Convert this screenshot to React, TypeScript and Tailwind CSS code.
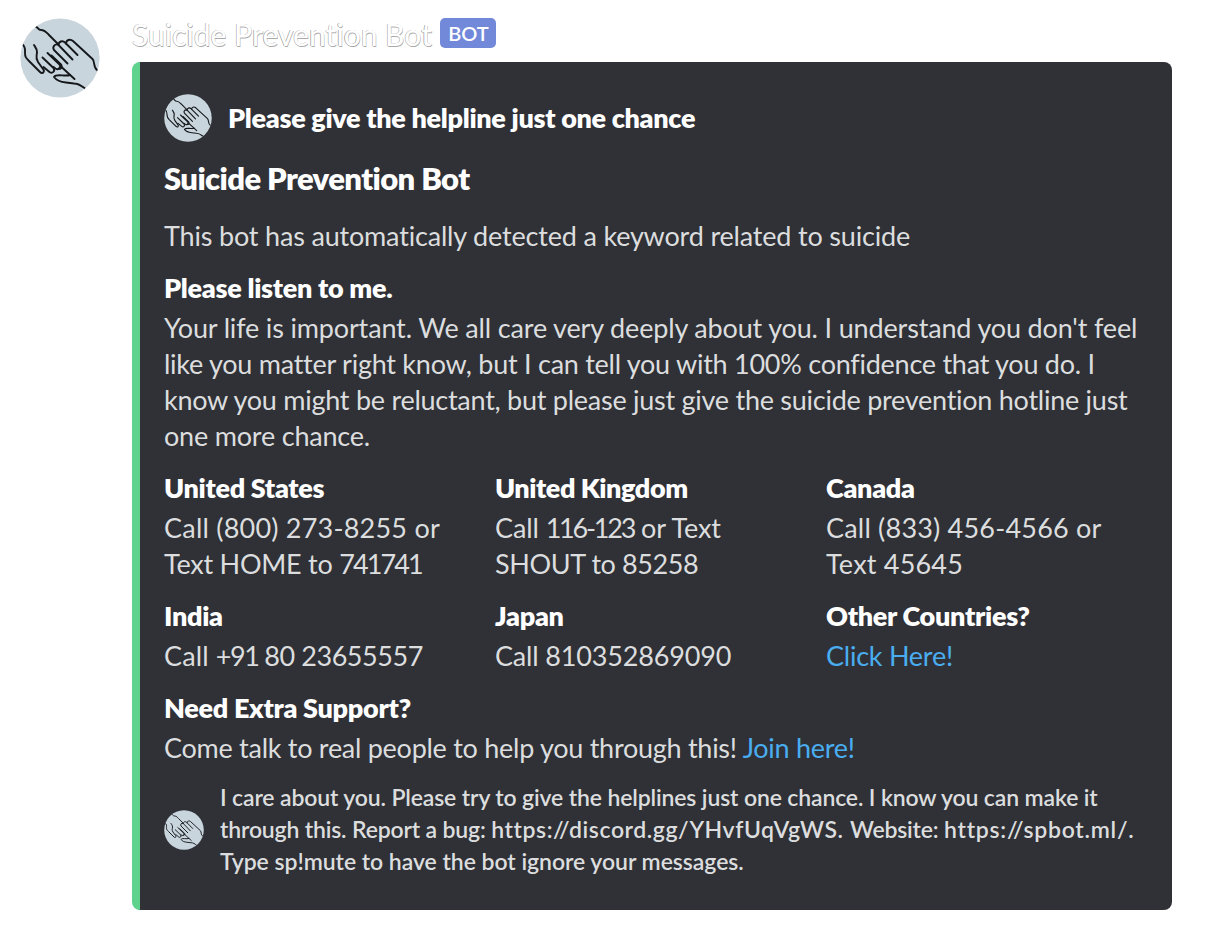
import type { ReactNode } from "react";

function Hands({ className }: { className: string }) {
  return (
    <svg viewBox="0 0 80 80" className={className} fill="none" stroke="#15181b" strokeWidth="1.9" strokeLinecap="round" strokeLinejoin="round">
      <clipPath id="disc">
        <circle cx="40" cy="40" r="39.6" />
      </clipPath>
      <circle cx="40" cy="40" r="39.6" fill="#c9d5dd" stroke="none" />
      <g clipPath="url(#disc)">
        <path d="M15 8c3 1 3 4 6 4 4 0 6 3 8 5l9 9" />
        <path d="M2 26c4 3 3 6 3 9 0 4 1 5 4 8l11 11c3 3 5-1 3-3l-5-7c-3-5-1-6-1-10 0-3-1-4-3-7" />
        <path d="M22.500 39.500l11 10.500c2 3-1 6-4 4l-6-5" />
        <path d="M27.500 35l12 11.500c2 3-1 6-4 4l-2-1.500" />
        <path d="M31.500 37.500l9.500 9c2 3-1 5-2.500 4" />
        <path d="M47.500 45.500L34 32c-2-3 1-7 4.500-5l14 14.500" />
        <path d="M38.500 27c0-3.500 4-5 6.500-2.500L57.500 37" />
        <path d="M46 25.500c0-3.500 4-5 7-2.500L72.500 41c3 3 0 8 5 11.500" />
        <path d="M41.500 49L54.500 61" />
        <path d="M50 57c-5 2-14-2-16 2 3 4 7 5 12 5.500l8 1c5 0 7 2 11 5" />
      </g>
    </svg>
  );
}

function Name({ children }: { children: ReactNode }) {
  return <h3 className="h-9 text-[27px] leading-9 font-extrabold tracking-[-0.3px] text-white">{children}</h3>;
}

const line = "block whitespace-nowrap";

export default function App() {
  return (
    <main className="flex h-[938px] w-[1206px] items-start overflow-hidden bg-white pl-5 pt-[18px] font-['Lato',sans-serif] [font-variant-ligatures:none]">
      <Hands className="size-20 shrink-0" />
      <div className="ml-8 w-[1040px]">
        <header className="flex h-11 items-start">
          <span className="-mt-0.5 h-9 w-[308px] whitespace-nowrap text-[30px] leading-9 font-medium text-white [text-shadow:-0.6px_0_0.5px_#999,0.5px_0.6px_0.5px_#aaa]">Suicide Prevention Bot</span>
          <span className="h-[30px] w-14 rounded-[5px] bg-[#7289da] pl-px text-center text-[20px] leading-[31px] font-semibold text-white">BOT</span>
        </header>
        <article className="h-[848px] rounded-lg border-l-8 border-[#5fd38d] bg-[#2f3136] pl-6 pt-8 text-[27px] leading-9 text-[#dcddde]">
          <div className="flex h-12 items-center gap-4">
            <Hands className="size-12 shrink-0" />
            <span className="whitespace-nowrap font-extrabold tracking-[-0.32px] text-white">Please give the helpline just one chance</span>
          </div>
          <h2 className="mt-3.5 h-[46px] text-[31px] leading-[44px] font-extrabold tracking-[-0.6px] text-white">Suicide Prevention Bot</h2>
          <p className="mt-4 tracking-[-0.18px]">This bot has automatically detected a keyword related to suicide</p>
          <section className="mt-4">
            <Name>Please listen to me.</Name>
            <p className="mt-1">
              <span className={`${line} tracking-[-0.16px]`}>Your life is important. We all care very deeply about you. I understand you don't feel</span>
              <span className={`${line} tracking-[-0.26px]`}>like you matter right know, but I can tell you with 100% confidence that you do. I</span>
              <span className={`${line} tracking-[-0.26px]`}>know you might be reluctant, but please just give the suicide prevention hotline just</span>
              <span className={`${line} tracking-[-0.2px]`}>one more chance.</span>
            </p>
          </section>
          <div className="mt-4 grid grid-cols-[331px_331px_1fr] gap-y-4">
            <section>
              <Name>United States</Name>
              <p className="mt-1">
                <span className={`${line} tracking-[0.22px]`}>Call (800) 273-8255 or</span>
                <span className={`${line} tracking-[-0.25px]`}>Text HOME to <span className="tracking-[-1.9px]">741741</span></span>
              </p>
            </section>
            <section>
              <Name><span className="tracking-[-0.45px]">United Kingdom</span></Name>
              <p className="mt-1">
                <span className={`${line} tracking-[-0.1px]`}>Call <span className="tracking-[-2.2px]">116-123</span> or Text</span>
                <span className={`${line} tracking-[-0.4px]`}>SHOUT to 85258</span>
              </p>
            </section>
            <section>
              <Name>Canada</Name>
              <p className="mt-1">
                <span className={`${line} tracking-[0.2px]`}>Call (833) 456-4566 or</span>
                <span className={`${line} tracking-[0.2px]`}>Text 45645</span>
              </p>
            </section>
            <section>
              <Name>India</Name>
              <p className="mt-1 tracking-[-0.45px]"><span className="tracking-[0.1px]">Call </span><span className="tracking-[-1.3px]">+91 </span>80 23655557</p>
            </section>
            <section>
              <Name>Japan</Name>
              <p className="mt-1 tracking-[-0.17px]">Call 810352869090</p>
            </section>
            <section>
              <Name>Other Countries?</Name>
              <p className="mt-1 tracking-[-0.25px] text-[#4aadf0]">Click Here!</p>
            </section>
          </div>
          <section className="mt-4">
            <Name>Need Extra Support?</Name>
            <p className="mt-1 whitespace-nowrap tracking-[-0.27px]">
              Come talk to real people to help you through this! <a className="text-[#4aadf0]">Join here!</a>
            </p>
          </section>
          <footer className="mt-4 flex h-24 items-center gap-4 text-[23px] leading-8 font-semibold">
            <Hands className="size-10 shrink-0" />
            <p className="-mt-0.5">
              <span className={`${line} tracking-[-0.14px]`}>I care about you. Please try to give the helplines just one chance. I know you can make it</span>
              <span className={`${line} tracking-[-0.17px]`}>
                through this. Report a bug: <span className="tracking-[0.58px]">https://discord.gg/YHvfUqVgWS. </span>Website: <span className="tracking-[0.75px]">https://spbot.ml/.</span>
              </span>
              <span className={`${line} tracking-[-0.04px]`}>Type sp!mute to have the bot ignore your messages.</span>
            </p>
          </footer>
        </article>
      </div>
    </main>
  );
}
